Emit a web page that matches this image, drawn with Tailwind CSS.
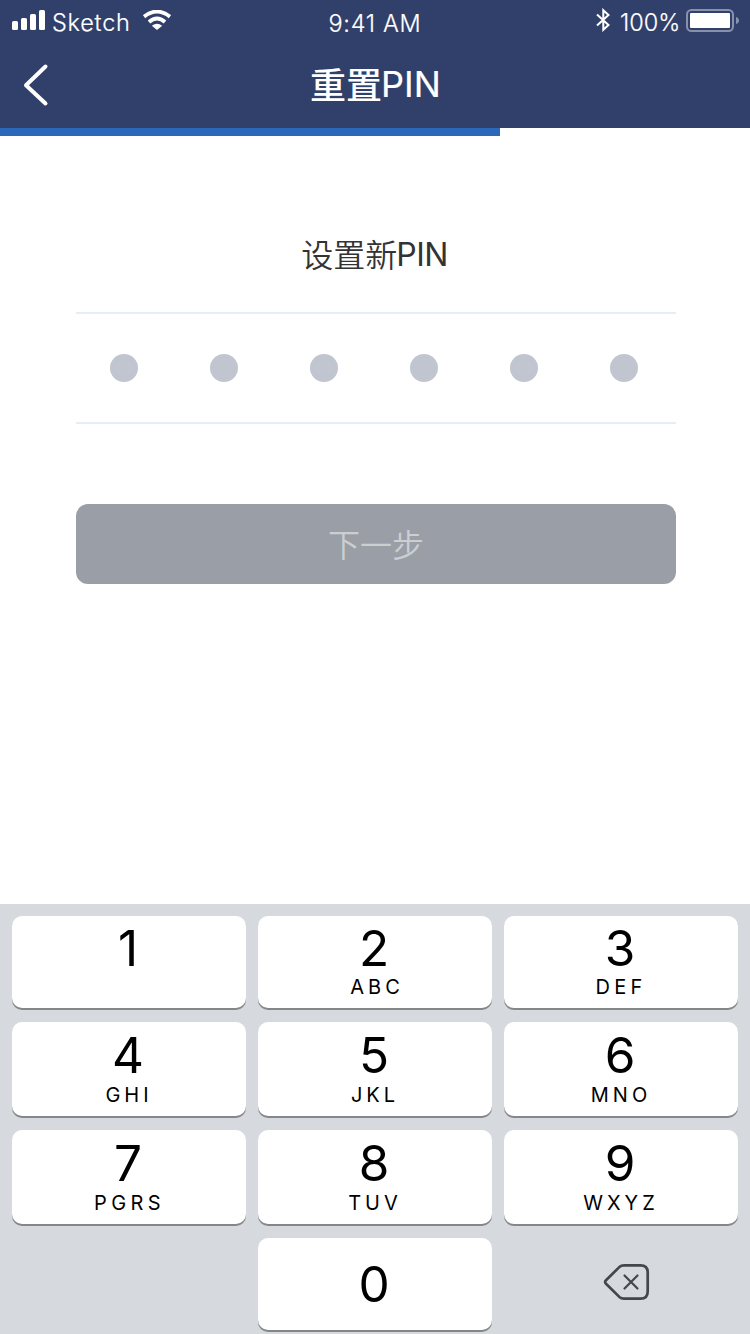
<!DOCTYPE html>
<html lang="zh-CN">
<head>
<meta charset="utf-8">
<title>重置PIN</title>
<script src="https://cdn.jsdelivr.net/npm/@tailwindcss/browser@4"></script>
</head>
<body class="bg-white font-['Inter','Noto_Sans_CJK_SC',sans-serif]">
<div class="w-[750px] h-[1334px] flex flex-col overflow-hidden">
  <header class="h-32 shrink-0 bg-[#30406b] text-white flex flex-col">
    <div class="h-10 grid grid-cols-3 text-2xl leading-6">
      <div class="flex items-start pl-3">
        <svg class="mt-[10px] w-[34px] h-5" viewBox="0 0 34 20" fill="#fff"><rect x="0" y="11" width="6" height="9" rx="1.5"/><rect x="9" y="8" width="6" height="12" rx="1.5"/><rect x="18" y="4" width="6" height="16" rx="1.5"/><rect x="27" y="0" width="6" height="20" rx="1.5"/></svg>
        <span class="mt-[11px] ml-[6px] w-[78px] text-[23.5px] tracking-[0.75px] font-light [-webkit-text-stroke:0.2px_white] whitespace-nowrap">Sketch</span>
        <svg class="mt-[10px] ml-[13px] w-7 h-5" viewBox="0 0 28 20" fill="none" stroke="#fff"><path d="M1 6.6Q14-3.4 27 6.6" stroke-width="3.9"/><path d="M6 11.9Q14 5.3 22 11.9" stroke-width="3.9"/><path d="M8.8 15.8Q14 11.8 19.2 15.8L14 20Z" fill="#fff" stroke="none"/></svg>
      </div>
      <div class="mt-3 text-center text-[23.5px] font-light [-webkit-text-stroke:0.2px_white] tracking-[0.7px]">9:41 AM</div>
      <div class="flex items-start justify-end pr-[11px]">
        <svg class="mt-2 w-4 h-6" viewBox="0 0 16 24" fill="none" stroke="#fff" stroke-width="2"><path d="M1 6.5 12.5 17 7.3 21.8V2.2l5.2 4.8L1 17.5"/></svg>
        <span class="mt-[11px] ml-[8px] w-[61px] text-[23.5px] font-light [-webkit-text-stroke:0.2px_white] whitespace-nowrap">100%</span>
        <svg class="mt-[9px] ml-[5px] w-[53px] h-[23px]" viewBox="0 0 53 23"><rect x="1" y="1" width="46" height="21" rx="4.5" fill="none" stroke="#8791ac" stroke-width="2"/><rect x="4" y="4" width="40" height="15" rx="1" fill="#fff"/><path d="M50 8Q53 9 53 11.5T50 15Z" fill="#8791ac"/></svg>
      </div>
    </div>
    <div class="flex h-[88px] items-start">
      <svg class="w-7 h-11 mt-[23px] ml-[22px]" viewBox="0 0 28 44" fill="none" stroke="#fff" stroke-width="4" stroke-linecap="round" stroke-linejoin="round"><path d="M23.5 3.5 4 22.3 23.5 40.5"/></svg>
      <h1 class="flex-1 mr-[50px] mt-[25px] flex justify-center text-4xl leading-9 font-medium"><span class="translate-y-[3px] translate-x-px">重置</span><span class="font-normal [-webkit-text-stroke:0.2px_white] translate-y-px">PIN</span></h1>
    </div>
  </header>
  <div class="h-2 w-[500px] shrink-0 bg-[#2a68b9]"></div>
  <main class="h-[768px] shrink-0 pl-[76px] pr-[74px] flex flex-col">
    <h2 class="mt-[103px] -ml-[2px] flex justify-center text-[32px] leading-8 text-[#333]"><span class="translate-y-px font-[350]">设置新</span><span class="tracking-[-0.5px] -translate-x-px">PIN</span></h2>
    <div class="mt-[41px] h-28 border-y-2 border-[#e4eefa] flex items-center gap-[72px] pl-[34px]">
      <i class="size-7 rounded-full bg-[#c0c5d0]"></i><i class="size-7 rounded-full bg-[#c0c5d0]"></i><i class="size-7 rounded-full bg-[#c0c5d0]"></i><i class="size-7 rounded-full bg-[#c0c5d0]"></i><i class="size-7 rounded-full bg-[#c0c5d0]"></i><i class="size-7 rounded-full bg-[#c0c5d0]"></i>
    </div>
    <button class="mt-20 h-20 pt-[3px] rounded-xl bg-[#9a9ea6] text-[#cccfd2] text-[32px] leading-8 font-[350]">下一步</button>
  </main>
  <section class="h-[430px] shrink-0 bg-[#d6d9de] px-3 pt-3 grid grid-cols-3 grid-rows-[92px_94px_94px_92px] gap-x-3 gap-y-[14px] text-black text-center text-[49.5px] leading-[50px]">
    <div class="rounded-[10px] bg-white shadow-[0_2px_0_#848688] pt-[7px] pr-[2px]">1</div>
    <div class="rounded-[10px] bg-white shadow-[0_2px_0_#848688] pt-[7px] pr-[2px]">2<div class="mt-1 text-xl leading-5 tracking-[4px] pl-[6px]">ABC</div></div>
    <div class="rounded-[10px] bg-white shadow-[0_2px_0_#848688] pt-[7px] pr-[2px]">3<div class="mt-1 text-xl leading-5 tracking-[4.2px] pl-[2px]">DEF</div></div>
    <div class="rounded-[10px] bg-white shadow-[0_2px_0_#848688] pt-2 pr-[2px]">4<div class="mt-[5px] text-xl leading-5 tracking-[4px] pl-[2px]">GHI</div></div>
    <div class="rounded-[10px] bg-white shadow-[0_2px_0_#848688] pt-2 pr-[2px]">5<div class="mt-[5px] text-xl leading-5 tracking-[4px] pl-[2px]">JKL</div></div>
    <div class="rounded-[10px] bg-white shadow-[0_2px_0_#848688] pt-2 pr-[2px]">6<div class="mt-[5px] text-xl leading-5 tracking-[4px] pl-[2px]">MNO</div></div>
    <div class="rounded-[10px] bg-white shadow-[0_2px_0_#848688] pt-2 pr-[2px]">7<div class="mt-[5px] text-xl leading-5 tracking-[4.4px] pl-[3px]">PGRS</div></div>
    <div class="rounded-[10px] bg-white shadow-[0_2px_0_#848688] pt-2 pr-[2px]">8<div class="mt-[5px] text-xl leading-5 tracking-[4px] pl-[2px]">TUV</div></div>
    <div class="rounded-[10px] bg-white shadow-[0_2px_0_#848688] pt-2 pr-[2px]">9<div class="mt-[5px] text-xl leading-5 tracking-[4px] pl-[2px]">WXYZ</div></div>
    <div></div>
    <div class="rounded-[10px] bg-white shadow-[0_2px_0_#848688] pt-[21px] pr-[2px]">0</div>
    <div class="pt-[25px] pl-[99px]">
      <svg class="w-[48px] h-[38px]" viewBox="0 0 48 38" fill="none" stroke="#43474c" stroke-linecap="round" stroke-linejoin="round"><path d="M21 2.3H37.5Q44.7 2.3 44.7 9.5V28.5Q44.7 35.7 37.5 35.7H21Q18.3 35.7 16.3 33.9L3 20.8Q1.3 19 3 17.2L16.3 4.1Q18.3 2.3 21 2.3Z" stroke-width="2.7"/><path d="M21.5 12.5 34.5 25.5M34.5 12.5 21.5 25.5" stroke-width="2.2"/></svg>
    </div>
  </section>
</div>
</body>
</html>
